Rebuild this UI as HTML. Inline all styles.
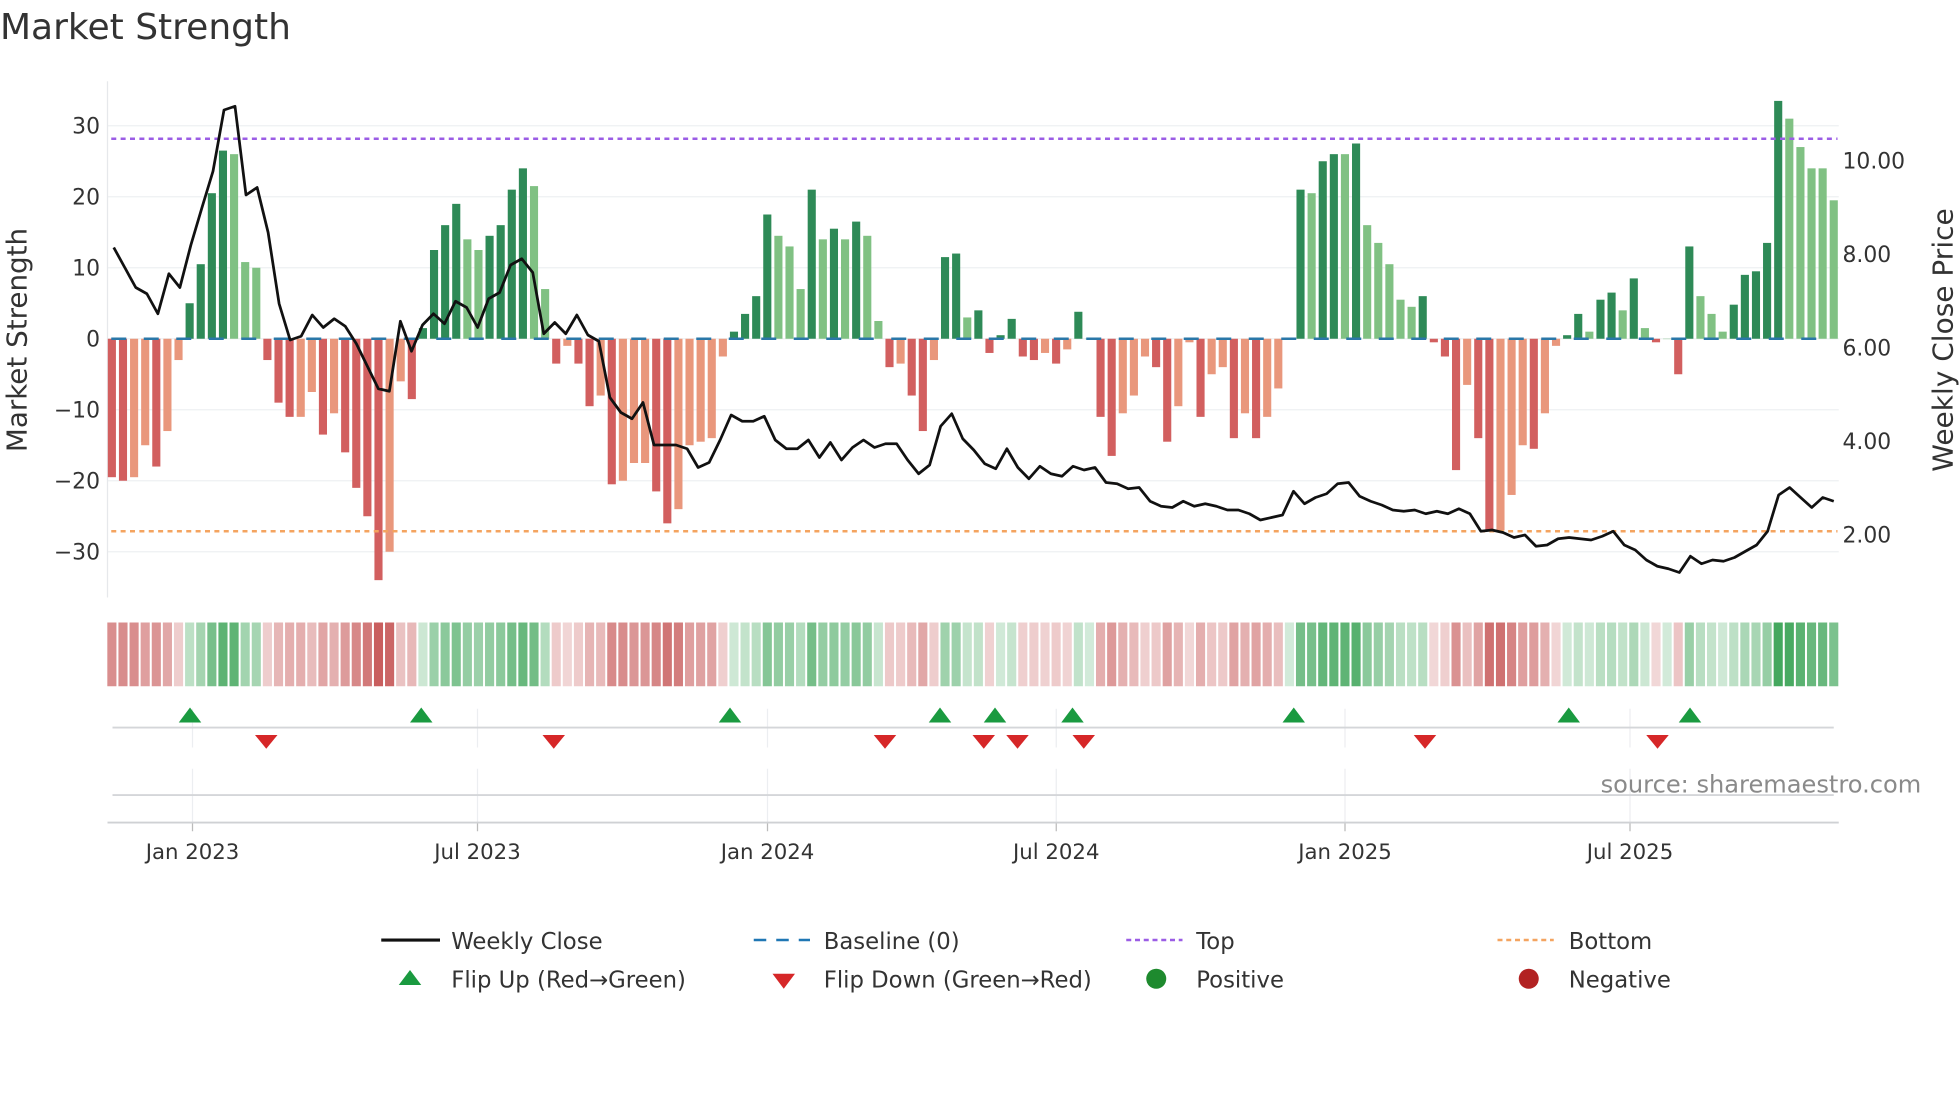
<!DOCTYPE html>
<html><head><meta charset="utf-8"><style>
html,body{margin:0;padding:0;background:#fff;}
svg{display:block;font-family:"DejaVu Sans","Liberation Sans",sans-serif;}
</style></head><body>
<svg id="s" xmlns="http://www.w3.org/2000/svg" width="1960" height="1102" viewBox="0 0 1568 881.6">
<text x="0" y="31" font-size="28.8" fill="#333">Market Strength</text>
<g id="g"></g>
<text transform="translate(21,272) rotate(-90)" font-size="22.2" fill="#333" text-anchor="middle">Market Strength</text>
<text transform="translate(1562,272) rotate(-90)" font-size="22.4" fill="#333" text-anchor="middle">Weekly Close Price</text>
<text x="1537" y="634" font-size="19.3" fill="#8a8a8a" text-anchor="end">source: sharemaestro.com</text>
<g font-size="18.2" fill="#333">
<line x1="305" y1="752" x2="352" y2="752" stroke="#111" stroke-width="2.5"/>
<text x="361" y="759">Weekly Close</text>
<line x1="603" y1="752" x2="648" y2="752" stroke="#1f77b4" stroke-width="2" stroke-dasharray="10,8"/>
<text x="659" y="759">Baseline (0)</text>
<line x1="901" y1="752" x2="946" y2="752" stroke="#9b5de5" stroke-width="2" stroke-dasharray="4,3"/>
<text x="957" y="759">Top</text>
<line x1="1198" y1="752" x2="1243" y2="752" stroke="#f4a460" stroke-width="2" stroke-dasharray="4,3"/>
<text x="1255" y="759">Bottom</text>
<polygon points="319,788 337,788 328,776" fill="#1a9a40"/>
<text x="361" y="790">Flip Up (Red→Green)</text>
<polygon points="618,779 636,779 627,791" fill="#d62728"/>
<text x="659" y="790">Flip Down (Green→Red)</text>
<circle cx="925" cy="783" r="8" fill="#1e8a2e"/>
<text x="957" y="790">Positive</text>
<circle cx="1223" cy="783" r="8" fill="#b22222"/>
<text x="1255" y="790">Negative</text>
</g>
</svg>
<script>
var v=[-19.5,-20,-19.5,-15,-18,-13,-3,5,10.5,20.5,26.5,26,10.8,10,-3,-9,-11,-11,-7.5,-13.5,-10.5,-16,-21,-25,-34,-30,-6,-8.5,1.5,12.5,16,19,14,12.5,14.5,16,21,24,21.5,7,-3.5,-1,-3.5,-9.5,-8,-20.5,-20,-17.5,-17.5,-21.5,-26,-24,-15,-14.5,-14,-2.5,1,3.5,6,17.5,14.5,13,7,21,14,15.5,14,16.5,14.5,2.5,-4,-3.5,-8,-13,-3,11.5,12,3,4,-2,0.5,2.8,-2.5,-3,-2,-3.5,-1.5,3.8,0,-11,-16.5,-10.5,-8,-2.5,-4,-14.5,-9.5,-0.5,-11,-5,-4,-14,-10.5,-14,-11,-7,0,21,20.5,25,26,26,27.5,16,13.5,10.5,5.5,4.5,6,-0.5,-2.5,-18.5,-6.5,-14,-27,-27,-22,-15,-15.5,-10.5,-1,0.5,3.5,1,5.5,6.5,4,8.5,1.5,-0.5,0,-5,13,6,3.5,1,4.8,9,9.5,13.5,33.5,31,27,24,24,19.5];
var p=[198,214,230,235,251,219,230,196,166,137,88,85,156,150,186,243,272,269,252,262,255,261,275,293,311,313,257,281,260,251,259,241,246,262,239,234,212,207,218,267,258,267,252,268,273,318,330,335,322,356,356,356,359,374,370,352,332,337,337,333,352,359,359,352,366,354,368,358,352,358,355,355,368,379,372,341,331,351,360,371,375,359,374,383,373,379,381,373,376,374,386,387,391,390,401,405,406,401,405,403,405,408,408,411,416,414,412,393,403,398,395,387,386,397,401,404,408,409,408,411,409,411,407,411,425,424,426,430,428,437,436,431,430,431,432,429,425,436,440,448,453,455,458,445,451,448,449,446,441,436,425,396,390,398,406,398,401];
var sv=(1467-89.5)/(v.length-1), sp=(1467-91)/(p.length-1);
var X=function(i){return 89.5+sv*i;}, XP=function(i){return 91+sp*i;}, Y=function(val){return 271-val*5.68;};
var h='';
[30,20,10,0,-10,-20,-30].forEach(function(t){var y=Y(t);h+='<line x1="86" x2="1471" y1="'+y+'" y2="'+y+'" stroke="#eef0f2" stroke-width="1"/>';
h+='<text x="80" y="'+(y+6)+'" font-size="17.5" fill="#333" text-anchor="end">'+(t<0?'−'+(-t):t)+'</text>';});
[[10,"10.00"],[8,"8.00"],[6,"6.00"],[4,"4.00"],[2,"2.00"]].forEach(function(a){var y=428-(a[0]-2)*37.4;h+='<text x="1474" y="'+(y+6)+'" font-size="17.5" fill="#333">'+a[1]+'</text>';});
h+='<line x1="86" x2="86" y1="65" y2="478" stroke="#e6e8eb"/>';
var bw=sv*0.73;
for(var i=0;i<v.length;i++){var a=v[i],b=i?v[i-1]:0;var dark=Math.abs(a)>Math.abs(b)||a*b<0;var c=a>=0?(dark?'#2e8a57':'#80c183'):(dark?'#d25f5f':'#e9977c');
var y0=Y(0),y1=Y(a);h+='<rect x="'+(X(i)-bw/2)+'" y="'+Math.min(y0,y1)+'" width="'+bw+'" height="'+Math.max(Math.abs(y1-y0),0.3)+'" fill="'+c+'"/>';}
h+='<line x1="89" x2="1467" y1="271" y2="271" stroke="#2a77a8" stroke-width="2" stroke-dasharray="12,14"/>';
h+='<line x1="89" x2="1470" y1="111" y2="111" stroke="#9b5de5" stroke-width="2" stroke-dasharray="4,3.5"/>';
h+='<line x1="89" x2="1470" y1="425" y2="425" stroke="#f4a460" stroke-width="2" stroke-dasharray="4,3.5"/>';
var d='';for(i=0;i<p.length;i++)d+=(i?'L':'M')+XP(i).toFixed(1)+' '+p[i];
h+='<path d="'+d+'" fill="none" stroke="#111" stroke-width="2.2" stroke-linejoin="round"/>';
function mix(c,t){return 'rgb('+c.map(function(x){return Math.round(255+(x-255)*t);}).join(',')+')';}
var hw=sv*0.82;
for(i=0;i<v.length;i++){var t=0.22+0.7*Math.min(Math.abs(v[i])/32,1);var col=v[i]>=0?mix([52,160,80],t):mix([196,80,80],t);
h+='<rect x="'+(X(i)-hw/2)+'" y="498" width="'+hw+'" height="51" fill="'+col+'"/>';}
[[154,"Jan 2023"],[382,"Jul 2023"],[614,"Jan 2024"],[845,"Jul 2024"],[1076,"Jan 2025"],[1304,"Jul 2025"]].forEach(function(a){
h+='<line x1="'+a[0]+'" x2="'+a[0]+'" y1="567" y2="598" stroke="#eceef1"/><line x1="'+a[0]+'" x2="'+a[0]+'" y1="615" y2="658" stroke="#eceef1"/>';
h+='<line x1="'+a[0]+'" x2="'+a[0]+'" y1="658" y2="665" stroke="#bbb"/>';
h+='<text x="'+a[0]+'" y="687" font-size="17" fill="#333" text-anchor="middle">'+a[1]+'</text>';});
h+='<line x1="90" x2="1467" y1="582" y2="582" stroke="#d4d6d9" stroke-width="1.5"/>';
h+='<line x1="90" x2="1467" y1="636" y2="636" stroke="#d4d6d9" stroke-width="1.5"/>';
h+='<line x1="86" x2="1471" y1="658" y2="658" stroke="#cfd1d4" stroke-width="1.5"/>';
[152,337,584,752,796,858,1035,1255,1352].forEach(function(x){h+='<polygon points="'+(x-9)+',578 '+(x+9)+',578 '+x+',566" fill="#1a9a40"/>';});
[213,443,708,787,814,867,1140,1326].forEach(function(x){h+='<polygon points="'+(x-9)+',588 '+(x+9)+',588 '+x+',599" fill="#d62728"/>';});
document.getElementById('g').innerHTML=h;
</script>
</body></html>
